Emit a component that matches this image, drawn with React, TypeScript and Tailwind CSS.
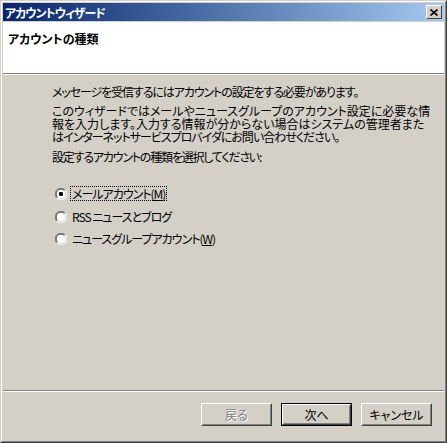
import React from "react";

const font = {
  fontFamily: '"Noto Sans CJK JP", "Noto Sans", sans-serif',
};

function Radio({ checked }: { checked?: boolean }) {
  return (
    <svg width="12" height="12" viewBox="0 0 12 12" className="shrink-0">
      <circle cx="6" cy="6" r="5.5" fill="#ffffff" />
      <path d="M10.2 1.8 A5.5 5.5 0 0 0 1.8 10.2" stroke="#808080" strokeWidth="1" fill="none" />
      <path d="M9.5 2.5 A4.5 4.5 0 0 0 2.5 9.5" stroke="#404040" strokeWidth="1" fill="none" />
      <path d="M1.8 10.2 A5.5 5.5 0 0 0 10.2 1.8" stroke="#ffffff" strokeWidth="1" fill="none" />
      <path d="M2.5 9.5 A4.5 4.5 0 0 0 9.5 2.5" stroke="#d4d0c8" strokeWidth="1" fill="none" />
      {checked && <rect x="4" y="4" width="4" height="4" rx="1.2" fill="#000000" />}
    </svg>
  );
}

function Btn({
  children,
  disabled,
  def,
}: {
  children: React.ReactNode;
  disabled?: boolean;
  def?: boolean;
}) {
  return (
    <div className={"w-[71px] h-[23px] " + (def ? "border border-black" : "")}>
      <div className="w-full h-full border border-t-white border-l-white border-r-[#404040] border-b-[#404040]">
        <div className="w-full h-full border border-t-[#d4d0c8] border-l-[#d4d0c8] border-r-[#808080] border-b-[#808080] flex items-center justify-center">
          {disabled ? (
            <span className="text-[12px] leading-[13px] text-[#808080] [text-shadow:1px_1px_0_#ffffff]">
              {children}
            </span>
          ) : (
            <span className="text-[12px] leading-[13px] text-black">{children}</span>
          )}
        </div>
      </div>
    </div>
  );
}

export default function App() {
  return (
    <div
      style={font}
      className="w-[447px] h-[443px] bg-[#d4d0c8] [font-feature-settings:'palt'] text-black"
    >
      <div className="w-full h-full border border-t-[#d4d0c8] border-l-[#d4d0c8] border-r-[#404040] border-b-[#404040]">
        <div className="w-full h-full border border-t-white border-l-white border-r-[#808080] border-b-[#808080] p-px flex flex-col">
          {/* Title bar */}
          <div className="h-[18px] bg-gradient-to-r from-[#0a246a] to-[#a6caf0] flex items-center justify-between pl-[2px] pr-[2px]">
            <span className="text-white font-bold text-[12px] leading-[13px] tracking-[-1px]">
              アカウントウィザード
            </span>
            <div className="w-[16px] h-[14px] bg-[#d4d0c8] border border-t-white border-l-white border-r-[#404040] border-b-[#404040] flex items-center justify-center">
              <svg width="8" height="7" viewBox="0 0 8 7">
                <path d="M0.5 0.5 L7.5 6.5 M7.5 0.5 L0.5 6.5" stroke="#000" strokeWidth="1.6" />
              </svg>
            </div>
          </div>
          {/* Header */}
          <div className="mt-px h-[51px] bg-white pl-[5px] pt-[10px]">
            <div className="font-bold text-[12px] leading-[13px]">アカウントの種類</div>
          </div>
          <div className="h-px bg-[#808080]" />
          <div className="h-px bg-white" />
          {/* Body */}
          <div className="flex-1 flex flex-col pl-[49px] pt-[10px] text-[12px] leading-[13px]">
            <p className="tracking-[-1.1px]">
              メッセージを受信するにはアカウントの設定をする必要があります。
            </p>
            <div className="mt-[6px] flex flex-col">
              <p>このウィザードではメールやニュースグループのアカウント設定に必要な情</p>
              <p>報を入力します。入力する情報が分からない場合はシステムの管理者また</p>
              <p className="tracking-[-1px]">
                はインターネットサービスプロバイダにお問い合わせください。
              </p>
            </div>
            <p className="mt-[7px] tracking-[-1.2px]">
              設定するアカウントの種類を選択してください:
            </p>
            <div className="mt-[23px] flex flex-col gap-[9px] pl-[3px] tracking-[-1px]">
              <div className="flex items-center gap-[3px]">
                <Radio checked />
                <span className="border border-dotted border-black px-px">
                  メールアカウント(<u>M</u>)
                </span>
              </div>
              <div className="flex items-center gap-[3px]">
                <Radio />
                <span className="px-[2px]">RSS ニュースとブログ</span>
              </div>
              <div className="flex items-center gap-[3px]">
                <Radio />
                <span className="px-[2px]">
                  ニュースグループアカウント(<u>W</u>)
                </span>
              </div>
            </div>
          </div>
          {/* Footer */}
          <div className="h-px bg-[#808080]" />
          <div className="h-px bg-white" />
          <div className="h-[48px] flex items-start justify-end gap-[9px] pt-[11px] pr-[12px]">
            <Btn disabled>戻る</Btn>
            <Btn def>次へ</Btn>
            <Btn>キャンセル</Btn>
          </div>
        </div>
      </div>
    </div>
  );
}
